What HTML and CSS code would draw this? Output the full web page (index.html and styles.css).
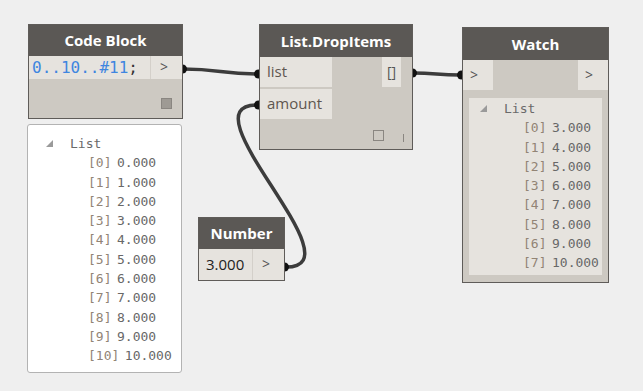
FILE: index.html
```html
<!DOCTYPE html>
<html>
<head>
<meta charset="utf-8">
<link rel="stylesheet" href="styles.css">
</head>
<body>
<div class="canvas">
  <svg class="wires" width="643" height="391" viewBox="0 0 643 391">
    <path d="M183 69 C 220 69, 221 74, 258 74" />
    <path d="M413 73 C 436 73, 437 75, 460 75" />
    <path d="M286 267 C 361 267, 182 105, 257 105" />
    <circle cx="182.5" cy="69" r="4.5" />
    <circle cx="258.5" cy="74" r="4.5" />
    <circle cx="258.5" cy="105" r="4.5" />
    <circle cx="412.5" cy="73" r="4.5" />
    <circle cx="461.5" cy="75" r="4.5" />
    <circle cx="284.5" cy="267" r="4.5" />
  </svg>

  <div class="node code-node">
    <div class="hdr">Code Block</div>
    <div class="row">
      <div class="cell code-cell"><span class="code">0..10..#11</span><span class="semi">;</span></div>
      <div class="cell gt-cell">&gt;</div>
    </div>
    <div class="foot foot-code"><span class="sq-fill"></span></div>
  </div>

  <div class="preview">
    <div class="tree-head"><svg class="tri" width="7" height="7" viewBox="0 0 7 7"><polygon points="7,0 7,7 0,7"/></svg><span class="list-label">List</span></div>
    <div class="items items-left">
      <div class="item"><span class="idx">[0]</span><span class="val">0.000</span></div>
      <div class="item"><span class="idx">[1]</span><span class="val">1.000</span></div>
      <div class="item"><span class="idx">[2]</span><span class="val">2.000</span></div>
      <div class="item"><span class="idx">[3]</span><span class="val">3.000</span></div>
      <div class="item"><span class="idx">[4]</span><span class="val">4.000</span></div>
      <div class="item"><span class="idx">[5]</span><span class="val">5.000</span></div>
      <div class="item"><span class="idx">[6]</span><span class="val">6.000</span></div>
      <div class="item"><span class="idx">[7]</span><span class="val">7.000</span></div>
      <div class="item"><span class="idx">[8]</span><span class="val">8.000</span></div>
      <div class="item"><span class="idx">[9]</span><span class="val">9.000</span></div>
      <div class="item"><span class="idx">[10]</span><span class="val">10.000</span></div>
    </div>
  </div>

  <div class="node drop-node">
    <div class="hdr">List.DropItems</div>
    <div class="drop-body">
      <div class="inputs">
        <div class="cell port">list</div>
        <div class="cell port">amount</div>
      </div>
      <div class="cell out-cell">[]</div>
    </div>
    <div class="foot foot-drop"><span class="sq-hollow"></span><span class="bar"></span></div>
  </div>

  <div class="node number-node">
    <div class="hdr">Number</div>
    <div class="row num-row">
      <div class="cell num-cell">3.000</div>
      <div class="cell gt-cell">&gt;</div>
    </div>
  </div>

  <div class="node watch-node">
    <div class="hdr">Watch</div>
    <div class="watch-row">
      <div class="cell wgt">&gt;</div>
      <div class="cell wgt">&gt;</div>
    </div>
    <div class="watch-list">
      <div class="tree-head"><svg class="tri" width="7" height="7" viewBox="0 0 7 7"><polygon points="7,0 7,7 0,7"/></svg><span class="list-label">List</span></div>
      <div class="items items-right">
        <div class="item"><span class="idx">[0]</span><span class="val">3.000</span></div>
        <div class="item"><span class="idx">[1]</span><span class="val">4.000</span></div>
        <div class="item"><span class="idx">[2]</span><span class="val">5.000</span></div>
        <div class="item"><span class="idx">[3]</span><span class="val">6.000</span></div>
        <div class="item"><span class="idx">[4]</span><span class="val">7.000</span></div>
        <div class="item"><span class="idx">[5]</span><span class="val">8.000</span></div>
        <div class="item"><span class="idx">[6]</span><span class="val">9.000</span></div>
        <div class="item"><span class="idx">[7]</span><span class="val">10.000</span></div>
      </div>
    </div>
  </div>
</div>
</body>
</html>
```

FILE: styles.css
```css
html, body {
  margin: 0;
  padding: 0;
  background: #efefef;
}

.canvas {
  position: relative;
  width: 643px;
  height: 391px;
  overflow: hidden;
  background: #efefef;
  font-family: "Open Sans", "Noto Sans", sans-serif;
}

.wires {
  position: absolute;
  left: 0;
  top: 0;
  z-index: 0;
}

.wires path {
  fill: none;
  stroke: #3c3c3c;
  stroke-width: 3.5;
}

.wires circle {
  fill: #111;
}

.node {
  position: absolute;
  z-index: 1;
  box-sizing: border-box;
  background: #cdc9c2;
  border: 1px solid #5f5c59;
  display: flex;
  flex-direction: column;
}

.hdr {
  background: #5b5855;
  color: #fff;
  font-weight: 700;
  font-size: 15px;
  text-align: center;
  flex: none;
}

.cell {
  background: #e6e3de;
  color: #5a5a5a;
  box-sizing: border-box;
}

.row {
  display: flex;
  flex: none;
}

.gt-cell {
  width: 32px;
  border-left: 1px solid #d4d0ca;
  font-size: 14px;
  color: #555;
  padding-left: 9px;
}

/* Code Block */
.code-node {
  left: 28px;
  top: 24px;
  width: 155px;
  height: 95px;
}

.code-node .hdr {
  height: 31px;
  line-height: 31px;
}

.code-node .row {
  height: 23px;
}

.code-cell {
  flex: 1;
  font-family: "DejaVu Sans Mono", monospace;
  font-size: 16px;
  line-height: 23px;
  padding-left: 3px;
  white-space: nowrap;
  overflow: hidden;
}

.code-node .gt-cell {
  line-height: 21px;
}

.code {
  color: #3f86e0;
}

.semi {
  color: #333;
}

.foot {
  flex: 1;
  display: flex;
  justify-content: flex-end;
  align-items: flex-end;
}

.foot-code {
  padding: 0 10px 9px 0;
}

.sq-fill {
  width: 11px;
  height: 11px;
  box-sizing: border-box;
  background: #9e9a94;
  border: 1px solid #8a8681;
}

/* Preview bubble */
.preview {
  position: absolute;
  z-index: 1;
  left: 27px;
  top: 124px;
  width: 155px;
  height: 249px;
  box-sizing: border-box;
  background: #fff;
  border: 1px solid #b3b3b3;
  border-radius: 3px;
  padding: 9px 0 0 18px;
  font-family: "DejaVu Sans Mono", monospace;
  font-size: 13px;
}

.tree-head {
  display: flex;
  align-items: center;
  height: 19.3px;
}

.tri {
  fill: #9a9a9a;
  margin-right: 17px;
}

.list-label {
  color: #6a6a6a;
}

.item {
  display: flex;
  height: 19.3px;
  line-height: 19.3px;
  gap: 5.5px;
  white-space: nowrap;
}

.idx {
  color: #928475;
}

.val {
  color: #686868;
}

.items-left {
  padding-left: 42px;
}

/* List.DropItems */
.drop-node {
  left: 259px;
  top: 24px;
  width: 154px;
  height: 126px;
}

.drop-node .hdr {
  height: 32px;
  line-height: 32px;
}

.drop-body {
  display: flex;
  justify-content: space-between;
  flex: none;
}

.inputs {
  display: flex;
  flex-direction: column;
  gap: 2px;
}

.port {
  width: 72px;
  height: 30px;
  line-height: 29px;
  font-size: 15px;
  color: #5e5650;
  padding-left: 7px;
}

.out-cell {
  width: 19px;
  height: 30px;
  margin-right: 11px;
  line-height: 29px;
  font-size: 14px;
  text-align: center;
  color: #555;
}

.foot-drop {
  padding: 0 8px 7px 0;
  gap: 19px;
  align-items: flex-end;
}

.sq-hollow {
  width: 11px;
  height: 11px;
  box-sizing: border-box;
  border: 1px solid #8a8681;
  margin-bottom: 1px;
}

.bar {
  width: 1px;
  height: 8px;
  background: #8a8681;
}

/* Number */
.number-node {
  left: 198px;
  top: 217px;
  width: 87px;
  height: 64px;
}

.number-node .hdr {
  height: 31px;
  line-height: 31px;
}

.num-row {
  height: 31px;
}

.num-cell {
  width: 53px;
  font-size: 15px;
  color: #222;
  line-height: 30px;
  padding-left: 7px;
}

.number-node .gt-cell {
  line-height: 29px;
  flex: 1;
}

/* Watch */
.watch-node {
  left: 462px;
  top: 27px;
  width: 147px;
  height: 256px;
}

.watch-node .hdr {
  height: 32px;
  line-height: 32px;
  font-size: 15px;
}

.watch-row {
  display: flex;
  justify-content: space-between;
  height: 30px;
  flex: none;
}

.wgt {
  width: 30px;
  font-size: 14px;
  line-height: 29px;
  padding-left: 7px;
  color: #555;
}

.watch-list {
  flex: 1;
  margin: 8px 6px 7px 6px;
  background: #e6e3de;
  padding: 1px 0 0 11px;
  font-family: "DejaVu Sans Mono", monospace;
  font-size: 13px;
}

.items-right {
  padding-left: 43px;
}
```
